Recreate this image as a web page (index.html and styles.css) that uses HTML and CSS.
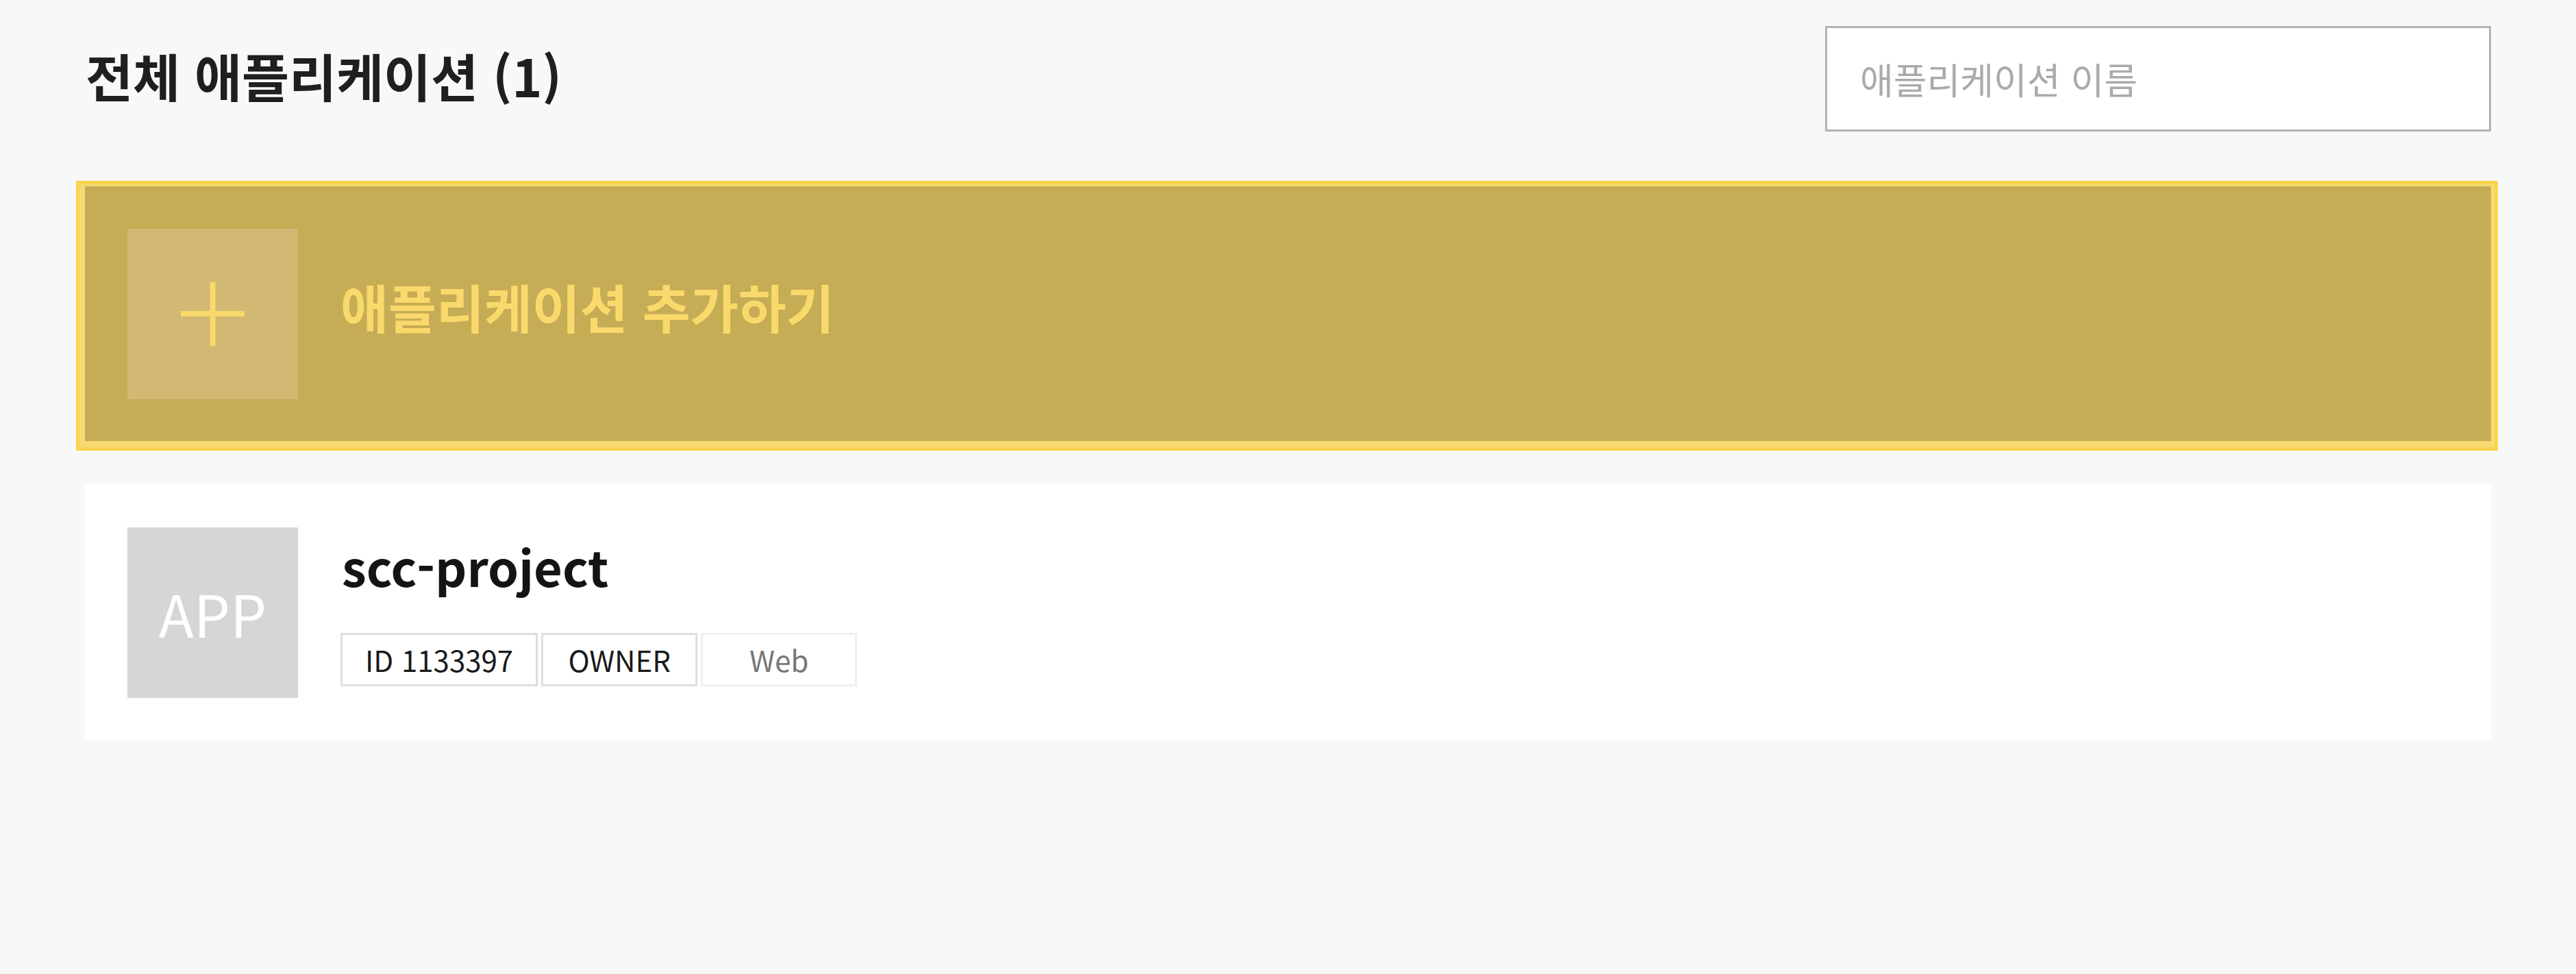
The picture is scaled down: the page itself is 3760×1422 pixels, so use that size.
FILE: index.html
```html
<!DOCTYPE html>
<html lang="ko">
<head>
<meta charset="utf-8">
<title>애플리케이션</title>
<link rel="stylesheet" href="styles.css">
</head>
<body>
<div class="page">
  <header class="top">
    <h1 class="title">전체 애플리케이션 (1)</h1>
    <input class="search" type="text" placeholder="애플리케이션 이름">
  </header>
  <div class="add-frame">
    <div class="card add">
      <div class="thumb add-thumb">
        <svg class="plus" width="93" height="93" viewBox="0 0 93 93">
          <rect x="42.5" y="0" width="8" height="93" fill="#f9d96b"/>
          <rect x="0" y="42" width="93" height="8" fill="#f9d96b"/>
        </svg>
      </div>
      <div class="add-label">애플리케이션 추가하기</div>
    </div>
  </div>
  <div class="card app">
    <div class="thumb app-thumb">APP</div>
    <div class="info">
      <div class="name">scc-project</div>
      <div class="tags">
        <span class="tag">ID 1133397</span>
        <span class="tag">OWNER</span>
        <span class="tag tag-light">Web</span>
      </div>
    </div>
  </div>
</div>
</body>
</html>
```
FILE: styles.css
```css
html, body {
  margin: 0;
  padding: 0;
  background: #f7f8f8;
  font-family: "Noto Sans CJK KR", "Noto Sans", sans-serif;
}

.page {
  padding: 38px 124px 0 124px;
}

.top {
  display: flex;
  justify-content: space-between;
  align-items: center;
  height: 154px;
}

.title {
  margin: -10px 0 0 1px;
  font-size: 75px;
  font-weight: 700;
  color: #1f1f1f;
  line-height: 1.2;
}

.search {
  width: 972px;
  height: 154px;
  box-sizing: border-box;
  border: 3px solid #b3b3b3;
  background: #fff;
  padding: 0 48px;
  font-family: inherit;
  font-size: 53px;
  color: #333;
  outline: none;
  margin: 0;
}

.search::placeholder {
  color: #aaaaaa;
}

.add-frame {
  margin: 72px -10px 0 -13px;
  border: 5px solid #f9d54f;
  background: #f7da72;
  padding: 3px 5px 9px 8px;
}

.card {
  display: flex;
  align-items: center;
  gap: 62px;
  height: 372px;
  box-sizing: border-box;
  padding: 0 62px;
}

.add {
  background: #c7ac56;
}

.thumb {
  width: 249px;
  height: 249px;
  flex: none;
  display: flex;
  align-items: center;
  justify-content: center;
}

.add-thumb {
  background: #d1b973;
}

.plus {
  display: block;
}

.add-label {
  color: #f9d96b;
  font-size: 76px;
  font-weight: 700;
  line-height: 1.2;
  margin-top: -20px;
}

.app {
  margin-top: 50px;
  background: #fff;
}

.app-thumb {
  background: #d6d6d6;
  color: #fff;
  font-size: 84px;
  font-weight: 400;
}

.info {
  display: flex;
  flex-direction: column;
  gap: 55px;
}

.name {
  font-size: 72px;
  font-weight: 700;
  color: #141414;
  line-height: 1.2;
  margin-left: 2px;
  margin-top: -3px;
}

.tags {
  display: flex;
  gap: 5px;
}

.tag {
  box-sizing: border-box;
  min-width: 228px;
  height: 78px;
  padding: 0 33px;
  border: 3px solid #dedede;
  display: flex;
  align-items: center;
  justify-content: center;
  font-size: 42px;
  color: #1a1a1a;
  line-height: 1;
}

.tag-light {
  border-color: #efefef;
  color: #777;
}
```
